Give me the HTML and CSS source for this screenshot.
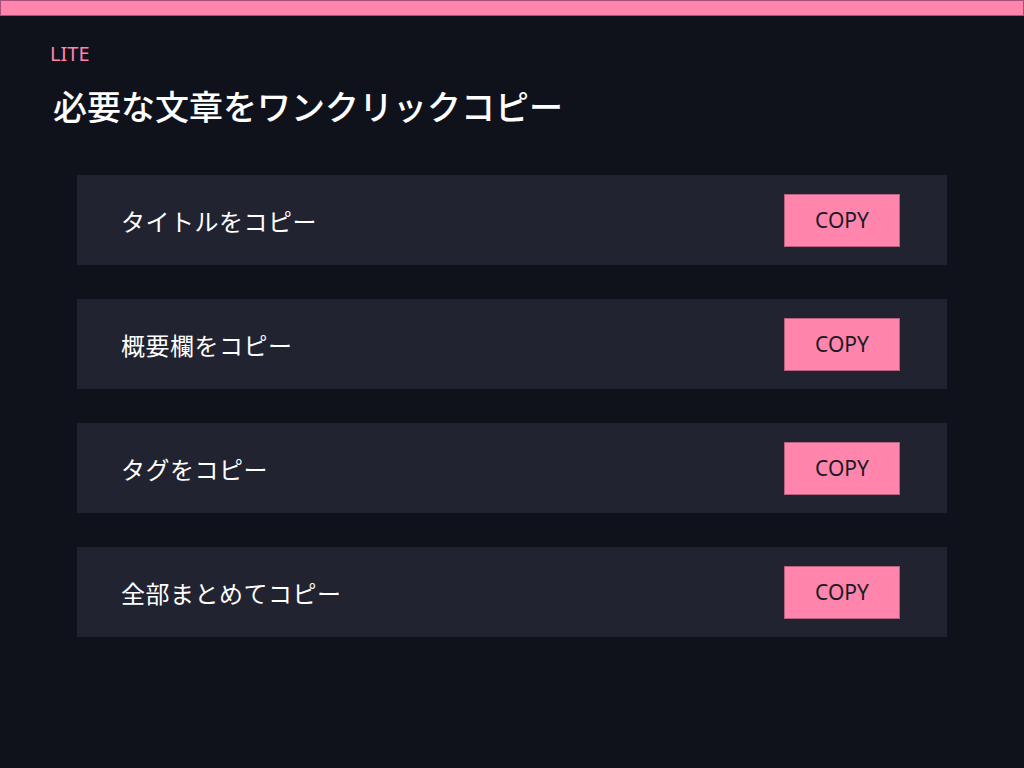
FILE: index.html
```html
<!DOCTYPE html>
<html lang="ja">
<head>
    <meta charset="UTF-8">
    <meta name="viewport" content="width=device-width, initial-scale=1.0">
    <title>ワンクリックコピー</title>
    <link rel="stylesheet" href="styles.css">
</head>
<body>
    <div class="top-bar"></div>
    <div class="container">
        <span class="badge">LITE</span>
        <h1>必要な文章をワンクリックコピー</h1>

        <div class="copy-list">
            <div class="copy-row">
                <span class="copy-label">タイトルをコピー</span>
                <button class="btn">COPY</button>
            </div>
            <div class="copy-row">
                <span class="copy-label">概要欄をコピー</span>
                <button class="btn">COPY</button>
            </div>
            <div class="copy-row">
                <span class="copy-label">タグをコピー</span>
                <button class="btn">COPY</button>
            </div>
            <div class="copy-row">
                <span class="copy-label">全部まとめてコピー</span>
                <button class="btn">COPY</button>
            </div>
        </div>
    </div>
</body>
</html>
```

FILE: styles.css
```css
/* Base */
body {
    margin: 0;
    padding: 0;
    background-color: #10121b;
    color: white;
    font-family: 'Noto Sans', 'Noto Sans CJK JP', sans-serif;
}
.top-bar {
    height: 14px;
    background-color: #ff85ad;
    border: 1px solid #a8507a;
}
.container {
    padding: 25px 50px 0 50px;
}
.badge {
    display: block;
    color: #ff85ad;
    font-size: 20px;
    line-height: 26px;
}
h1 {
    margin: 16px 0 0 3px;
    font-family: 'Noto Sans CJK JP', sans-serif;
    font-size: 34px;
    font-weight: 500;
    line-height: 46px;
}
.copy-list {
    display: flex;
    flex-direction: column;
    gap: 34px;
    margin: 46px 27px 0 27px;
}
.copy-row {
    display: flex;
    align-items: center;
    justify-content: space-between;
    height: 90px;
    padding: 0 47px 0 44px;
    background-color: #212430;
}
.copy-label {
    font-family: 'Noto Sans CJK JP', sans-serif;
    font-size: 24px;
    letter-spacing: 0.5px;
}
.btn {
    width: 116px;
    height: 53px;
    padding: 0;
    background-color: #ff85ad;
    color: #1b1a25;
    border: 1px solid #b8607f;
    font-family: 'Noto Sans', sans-serif;
    font-size: 21px;
    cursor: pointer;
}
```
